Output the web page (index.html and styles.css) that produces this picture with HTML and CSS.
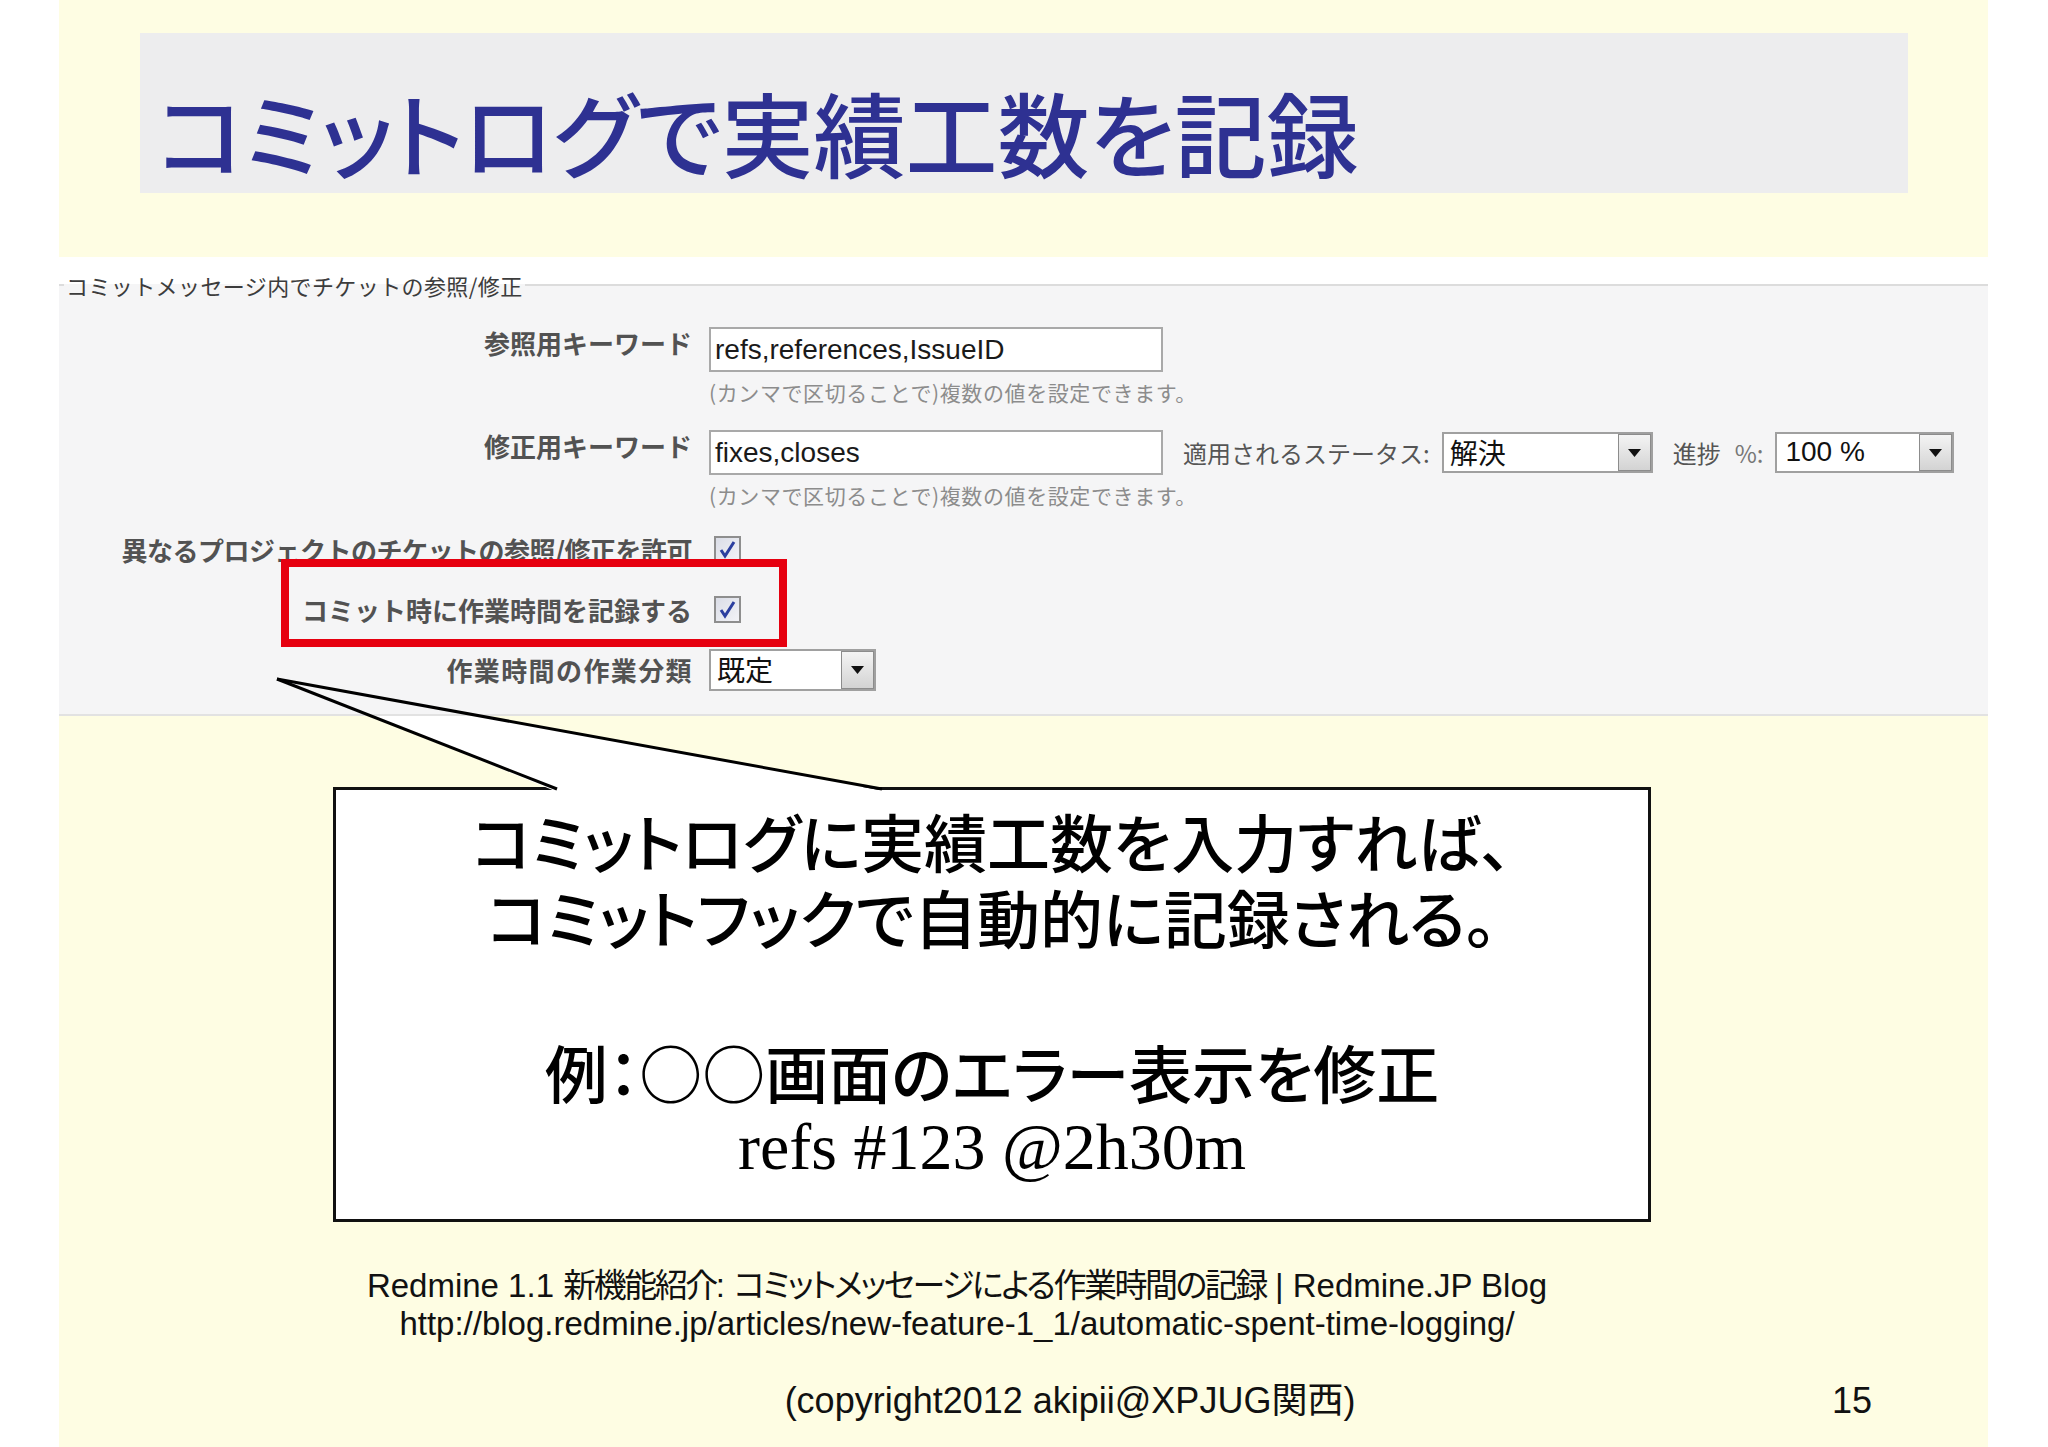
FILE: index.html
```html
<!DOCTYPE html>
<html lang="ja">
<head>
<meta charset="utf-8">
<title>コミットログで実績工数を記録</title>
<link rel="stylesheet" href="styles.css">
</head>
<body>
<div class="page">
  <div class="slide">
    <div class="title-box"><h1 class="title">コミットログで実績工数を記録</h1></div>

    <div class="shot">
      <fieldset class="set">
        <legend class="legend">コミットメッセージ内でチケットの参照/修正</legend>

        <div class="row r1">
          <div class="lbl lbl-top">参照用キーワード</div>
          <div class="field"><div class="input">refs,references,IssueID</div></div>
          <div class="hint">(カンマで区切ることで)複数の値を設定できます。</div>
        </div>

        <div class="row r2">
          <div class="lbl lbl-top">修正用キーワード</div>
          <div class="field">
            <div class="input">fixes,closes</div>
            <span class="status-lbl">適用されるステータス:</span>
            <div class="select sel-status">
              <span class="sel-text">解決</span>
              <span class="sel-btn"><svg width="13" height="8" viewBox="0 0 13 8"><polygon points="0,0 13,0 6.5,8" fill="#111"/></svg></span>
            </div>
            <span class="prog-lbl">進捗<span class="pct">%:</span></span>
            <div class="select sel-prog">
              <span class="sel-text latin">100 %</span>
              <span class="sel-btn"><svg width="13" height="8" viewBox="0 0 13 8"><polygon points="0,0 13,0 6.5,8" fill="#111"/></svg></span>
            </div>
          </div>
          <div class="hint">(カンマで区切ることで)複数の値を設定できます。</div>
        </div>

        <div class="row r3">
          <div class="lbl lbl-long">異なるプロジェクトのチケットの参照/修正を許可</div>
          <div class="field">
            <svg class="check" width="27" height="27" viewBox="0 0 27 27">
              <defs><linearGradient id="cg1" x1="0" y1="0" x2="1" y2="1"><stop offset="0" stop-color="#d9dce6"/><stop offset="1" stop-color="#f4f4f8"/></linearGradient></defs>
              <rect x="1" y="1" width="25" height="25" fill="url(#cg1)" stroke="#8e8e8e" stroke-width="2"/>
              <path d="M7 14 L11 20 L20 6" fill="none" stroke="#2c3f9f" stroke-width="3"/>
            </svg>
          </div>
        </div>

        <div class="row r4">
          <div class="lbl">コミット時に作業時間を記録する</div>
          <div class="field">
            <svg class="check" width="27" height="27" viewBox="0 0 27 27">
              <rect x="1" y="1" width="25" height="25" fill="url(#cg1)" stroke="#8e8e8e" stroke-width="2"/>
              <path d="M7 14 L11 20 L20 6" fill="none" stroke="#2c3f9f" stroke-width="3"/>
            </svg>
          </div>
        </div>

        <div class="row r5">
          <div class="lbl lbl-wide">作業時間の作業分類</div>
          <div class="field">
            <div class="select sel-act">
              <span class="sel-text">既定</span>
              <span class="sel-btn"><svg width="13" height="8" viewBox="0 0 13 8"><polygon points="0,0 13,0 6.5,8" fill="#111"/></svg></span>
            </div>
          </div>
        </div>
      </fieldset>
    </div>

    <div class="callout">
      <p class="c-jp">コミットログに実績工数を入力すれば、</p>
      <p class="c-jp">コミットフックで自動的に記録される。</p>
      <p class="c-gap"></p>
      <p class="c-jp">例：○○画面のエラー表示を修正</p>
      <p class="c-en">refs #123 @2h30m</p>
    </div>

    <div class="source">
      <div>Redmine 1.1 <span class="jp">新機能紹介</span>: <span class="jp">コミットメッセージによる作業時間の記録</span> | Redmine.JP Blog</div>
      <div>http://blog.redmine.jp/articles/new-feature-1_1/automatic-spent-time-logging/</div>
    </div>

    <div class="foot">
      <span class="copy">(copyright2012 akipii@XPJUG関西)</span>
      <span class="pageno">15</span>
    </div>
  </div>

  <div class="highlight"></div>

  <svg class="pointer" width="2048" height="1447" viewBox="0 0 2048 1447">
    <polygon points="372,716 484,716 884,791 555,791" fill="#ffffff"/>
    <line x1="277" y1="679" x2="557" y2="789" stroke="#000" stroke-width="3"/>
    <line x1="277" y1="679" x2="882" y2="789" stroke="#000" stroke-width="3"/>
  </svg>
</div>
</body>
</html>
```

FILE: styles.css
```css
body {
  margin: 0;
  background: #ffffff;
}

.page {
  position: relative;
  width: 2048px;
  height: 1447px;
  overflow: hidden;
  background: #ffffff;
}

.slide {
  margin-left: 59px;
  width: 1929px;
  height: 1447px;
  box-sizing: border-box;
  padding-top: 33px;
  background: #fefde3;
  display: flow-root;
}

.title-box {
  margin-left: 81px;
  width: 1768px;
  height: 160px;
  box-sizing: border-box;
  padding: 52px 0 0 17px;
  background: #ededee;
}

.title {
  margin: 0;
  font-family: "Noto Sans CJK JP", sans-serif;
  font-weight: 500;
  font-size: 92px;
  line-height: 1;
  font-feature-settings: "palt";
  color: #2e3192;
  white-space: nowrap;
}

/* embedded Redmine screenshot */
.shot {
  margin-top: 64px;
  padding-top: 15px;
  background: #ffffff;
  border-bottom: 2px solid #e2e2e2;
}

.set {
  margin: 0;
  padding: 0 0 23px;
  border: 0;
  border-top: 2px solid #dcdcdc;
  background: #f5f5f6;
  min-width: 0;
}

.legend {
  margin-left: 5px;
  padding: 0 2px;
  font-family: "Noto Sans CJK JP", sans-serif;
  font-size: 22px;
  line-height: 26px;
  letter-spacing: 0.4px;
  color: #3c3c3c;
}

.row {
  display: grid;
  grid-template-columns: 633px auto;
  column-gap: 17px;
  align-items: center;
}

.r1 { margin-top: 29px; }
.r2 { margin-top: 25px; }
.r3 { margin-top: 28px; }
.r4 { margin-top: 33px; }
.r5 { margin-top: 26px; }

.lbl {
  text-align: right;
  font-family: "Noto Sans CJK JP", sans-serif;
  font-weight: 700;
  font-size: 26px;
  line-height: 26px;
  color: #525252;
  white-space: nowrap;
}

.lbl-top {
  align-self: start;
  padding-top: 3px;
}

.lbl-long {
  letter-spacing: -0.5px;
}

.lbl-wide {
  letter-spacing: 1.4px;
  margin-right: -1px;
}

.field {
  display: flex;
  align-items: center;
}

.hint {
  grid-column: 2;
  margin-top: 7px;
  font-family: "Noto Sans CJK JP", sans-serif;
  font-size: 21px;
  line-height: 26px;
  letter-spacing: 0.6px;
  color: #8c8c8c;
  white-space: nowrap;
}

.input {
  width: 454px;
  height: 45px;
  box-sizing: border-box;
  border: 2px solid #a9a9a9;
  background: #ffffff;
  padding-left: 4px;
  font-family: "Liberation Sans", sans-serif;
  font-size: 28px;
  line-height: 41px;
  color: #1a1a1a;
  white-space: nowrap;
}

.status-lbl,
.prog-lbl {
  font-family: "Noto Sans CJK JP", sans-serif;
  font-size: 24px;
  color: #555555;
  white-space: nowrap;
}

.status-lbl { margin-left: 20px; }
.prog-lbl { margin-left: 20px; }
.pct { color: #777777; margin-left: 14px; }

.select {
  display: flex;
  height: 41px;
  box-sizing: border-box;
  border: 2px solid #a0a0a0;
  background: #ffffff;
}

.sel-status { width: 211px; margin-left: 12px; }
.sel-prog { width: 179px; margin-left: 12px; }
.sel-act { width: 167px; height: 42px; }

.sel-text {
  flex: 1;
  padding-left: 6px;
  font-family: "Noto Sans CJK JP", sans-serif;
  font-size: 28px;
  line-height: 36px;
  color: #111111;
  white-space: nowrap;
}

.sel-text.latin {
  font-family: "Liberation Sans", sans-serif;
  padding-left: 8px;
}

.sel-btn {
  width: 33px;
  box-sizing: border-box;
  border: 1px solid #8c8c8c;
  background: linear-gradient(#f4f4f4, #d3d3d3);
  display: flex;
  align-items: center;
  justify-content: center;
}

.check {
  display: block;
  margin-left: 5px;
}

/* callout */
.callout {
  margin: 71px 0 0 274px;
  width: 1318px;
  height: 435px;
  box-sizing: border-box;
  border: 3px solid #111111;
  background: #ffffff;
  padding-top: 12px;
  text-align: center;
}

.c-jp {
  margin: 0;
  font-family: "Noto Sans CJK JP", sans-serif;
  font-weight: 500;
  font-size: 63px;
  line-height: 76px;
  font-feature-settings: "palt";
  color: #000000;
  white-space: nowrap;
}

.c-gap {
  margin: 0;
  height: 79px;
}

.c-en {
  margin: 0;
  font-family: "Liberation Serif", serif;
  font-size: 66px;
  line-height: 76px;
  color: #000000;
}

/* footer */
.source {
  margin: 45px 0 0 198px;
  width: 1400px;
  text-align: center;
  font-family: "Liberation Sans", "Noto Sans CJK JP", sans-serif;
  font-size: 33px;
  line-height: 38px;
  font-feature-settings: "palt";
  color: #111111;
  white-space: nowrap;
}

.source .jp {
  letter-spacing: -2.5px;
}

.foot {
  display: flex;
  margin-top: 36px;
  font-family: "Liberation Sans", "Noto Sans CJK JP", sans-serif;
  font-size: 36px;
  line-height: 44px;
  color: #111111;
  white-space: nowrap;
}

.copy {
  margin-left: 611px;
  width: 800px;
  text-align: center;
}

.pageno {
  margin-left: 362px;
}

/* overlays */
.highlight {
  position: absolute;
  left: 281px;
  top: 559px;
  width: 506px;
  height: 88px;
  box-sizing: border-box;
  border: 8px solid #e60010;
}

.pointer {
  position: absolute;
  left: 0;
  top: 0;
  pointer-events: none;
}
```
